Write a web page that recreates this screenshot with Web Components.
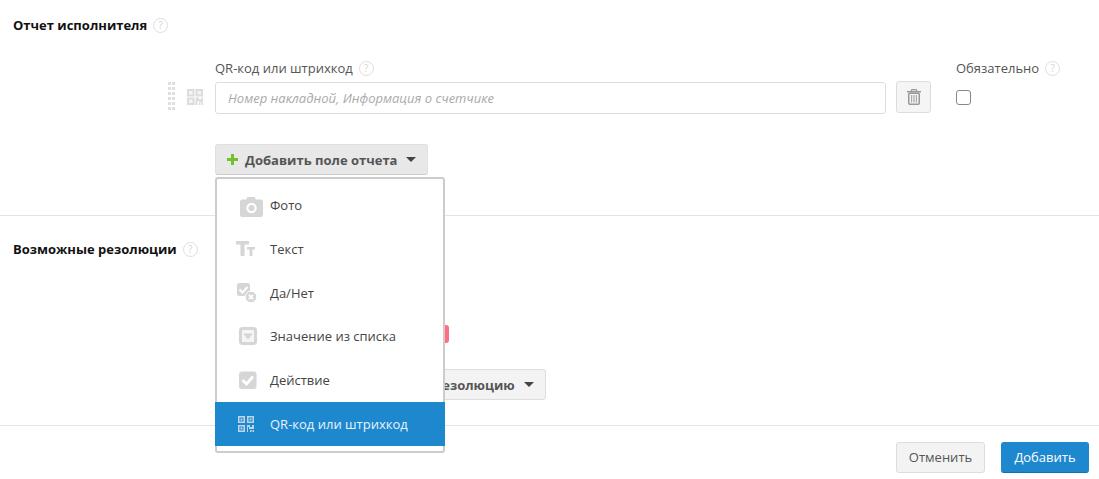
<!DOCTYPE html>
<html>
<head>
<meta charset="utf-8">
<title>Отчет исполнителя</title>
<style>
  html, body { margin: 0; background: #fff; }
  body { font: 13px/18px "Open Sans", "Liberation Sans", sans-serif; color: #333; }
</style>
</head>
<body>
<x-form>
  <x-section heading="Отчет исполнителя" size="216" top="16">
    <x-field-row label="QR-код или штрихкод" placeholder="Номер накладной, Информация о счетчике" required-label="Обязательно"></x-field-row>
    <x-dropdown>
      <x-button slot="trigger" active><x-plus slot="icon"></x-plus>Добавить поле отчета</x-button>
      <x-menu slot="menu">
        <x-menu-item icon="camera">Фото</x-menu-item>
        <x-menu-item icon="text">Текст</x-menu-item>
        <x-menu-item icon="yesno">Да/Нет</x-menu-item>
        <x-menu-item icon="list">Значение из списка</x-menu-item>
        <x-menu-item icon="check">Действие</x-menu-item>
        <x-menu-item icon="qr" selected>QR-код или штрихкод</x-menu-item>
      </x-menu>
    </x-dropdown>
  </x-section>
  <x-section heading="Возможные резолюции" size="210" top="24">
    <x-resolutions></x-resolutions>
  </x-section>
  <x-footer></x-footer>
</x-form>

<script>
const ICONS = {
  camera: `<path fill="#d6d6d6" d="M8 8.500a2 2 0 0 1 2-2h4l1.500-2.500h7L24 6.500h5a2 2 0 0 1 2 2V22a2 2 0 0 1-2 2H10a2 2 0 0 1-2-2z"/><circle cx="19.500" cy="15" r="5.200" fill="#fff"/><circle cx="19.500" cy="15" r="3" fill="#d6d6d6"/>`,
  text: `<path fill="#d6d6d6" d="M4 4h13v3.500h-4.500V19H8.500V7.500H4zM15 10h8v2.500h-2.500V19h-3v-6.500H15z"/>`,
  yesno: `<rect x="5" y="2" width="13" height="13" rx="2.500" fill="#d6d6d6"/><path fill="none" stroke="#fff" stroke-width="2" d="M7.500 8.500l3 3 5-5.500"/><circle cx="19" cy="16" r="5.800" fill="#d6d6d6" stroke="#fff" stroke-width="1"/><path stroke="#fff" stroke-width="1.800" d="M16.800 13.800l4.400 4.400M21.200 13.800l-4.400 4.400"/>`,
  list: `<rect x="8.500" y="4.500" width="15" height="15" rx="2" fill="#f6f6f6" stroke="#d6d6d6" stroke-width="3"/><path fill="#d6d6d6" d="M11 9.500h10l-5 6z"/>`,
  check: `<rect x="7" y="3.500" width="17.500" height="17.500" rx="3" fill="#d6d6d6"/><path fill="none" stroke="#fff" stroke-width="2.800" d="M10.500 12l4 4 6.500-7.500"/>`,
  qr: `<g fill="none" stroke="currentColor" stroke-width="1.500"><rect x="6.750" y="4.750" width="5.500" height="5.500"/><rect x="15.750" y="4.750" width="5.500" height="5.500"/><rect x="6.750" y="13.750" width="5.500" height="5.500"/></g><g fill="currentColor"><rect x="8.500" y="6.500" width="2" height="2"/><rect x="17.500" y="6.500" width="2" height="2"/><rect x="8.500" y="15.500" width="2" height="2"/><path d="M15 13h3v2h2v-2h2v4h-5v-2h-1v5h-1zM18 18h1.500v2H18zM20.500 18H22v2h-1.500z"/></g>`,
  qrFlat: `<g fill="#f4f4f4" stroke="#dcdcdc" stroke-width="2"><rect x="7" y="5" width="5.500" height="5.500"/><rect x="15.500" y="5" width="5.500" height="5.500"/><rect x="7" y="13.500" width="5.500" height="5.500"/></g><path fill="#dcdcdc" d="M14.500 12.500h3.500v2h2v-2h2v5h-4v-1.500h-1.500v4h-2zM18 18h1.500v2H18zM20.500 18H22v2h-1.500z"/>`
};

function define(name, css, html) {
  customElements.define(name, class extends HTMLElement {
    connectedCallback() {
      if (this.shadowRoot) return;
      const attrs = {};
      for (const a of this.attributes) attrs[a.name] = a.value;
      this.attachShadow({ mode: "open" }).innerHTML =
        `<style>${css}</style>` + (typeof html === "function" ? html(attrs) : html);
    }
  });
}

define("x-form", `:host{display:block;width:1099px;height:479px;overflow:hidden}`, `<slot></slot>`);

define("x-help", `
  :host{display:inline-flex;box-sizing:border-box;width:15px;height:15px;border:1px solid #dedede;border-radius:50%;
    align-items:center;justify-content:center;color:#d4d4d4;font:10px/13px "Open Sans",sans-serif}
`, `?`);

define("x-section", `
  :host{display:block;box-sizing:border-box;border-bottom:1px solid #e4e4e4;position:relative}
  h2{display:flex;align-items:center;gap:6px;margin:0;font:700 13px/18px "Open Sans",sans-serif;color:#111}
  header{padding:0 13px}
`, a => `<style>:host{height:${a.size}px}header{padding-top:${a.top}px}</style>
  <header><h2>${a.heading}<x-help></x-help></h2></header><slot></slot>`);

define("x-field-row", `
  :host{display:flex;padding:25px 0 0 168px}
  .handle{width:7px;height:28px;margin:23px 12px 0 0;
    background:repeating-linear-gradient(#e0e0e0 0 3px,transparent 3px 5px);
    -webkit-mask:repeating-linear-gradient(90deg,#000 0 3px,transparent 3px 4px)}
  .qr{width:28px;height:24px;margin:26px 0 0 -6px}
  .main{width:671px;margin-left:6px}
  label{display:flex;align-items:center;gap:6px;height:18px;margin-bottom:5px;color:#555}
  .input{box-sizing:border-box;height:32px;border:1px solid #ddd;border-radius:3px;padding:0 12px;
    font:italic 13px/30px "Open Sans",sans-serif;color:#aaa}
  .trash{box-sizing:border-box;width:35px;height:32px;margin:22px 0 0 10px;border:1px solid #ddd;border-radius:3px;background:#f5f5f5;
    display:flex;align-items:center;justify-content:center}
  .req{margin-left:25px}
  .box{box-sizing:border-box;width:15px;height:15px;border:1px solid #888;border-radius:3px;margin-top:13px;background:#fff}
`, a => `
  <div class="handle"></div>
  <svg class="qr" viewBox="0 0 28 24">${ICONS.qrFlat}</svg>
  <div class="main">
    <label>${a.label}<x-help></x-help></label>
    <div class="input">${a.placeholder}</div>
  </div>
  <div class="trash"><svg width="14" height="16" viewBox="0 0 14 16"><path fill="#999" d="M4.500 0h5l1 2H14v1.500H0V2h3.500zM5.300 1.200L5 2h4l-.3-.800z"/><rect x="1.750" y="4.250" width="10.500" height="11" rx="1" fill="none" stroke="#999" stroke-width="1.500"/><path fill="#aaa" d="M4 6h1.200v7.500H4zM6.400 6h1.200v7.500H6.400zM8.800 6H10v7.500H8.800z"/></svg></div>
  <div class="req">
    <label>${a["required-label"]}<x-help></x-help></label>
    <div class="box"></div>
  </div>`);

define("x-plus", `:host{display:block;width:11px;height:11px;background:
  linear-gradient(#72c02c,#72c02c) center/11px 3px no-repeat,
  linear-gradient(#72c02c,#72c02c) center/3px 11px no-repeat}`, ``);

define("x-button", `
  :host{display:inline-flex;box-sizing:border-box;height:31px;align-items:center;gap:7px;padding:0 11px;
    border:1px solid #ddd;border-radius:3px;background:#f3f3f3;font:700 13px/18px "Open Sans",sans-serif;color:#555;white-space:nowrap}
  :host([active]){background:#e8e8e8;border-color:#e0e0e0;border-bottom-color:#ccc}
  .caret{width:0;height:0;border:5px solid transparent;border-top-color:#444;border-bottom:0;margin-left:2px}
`, `<slot name="icon"></slot><slot></slot><span class="caret"></span>`);

define("x-dropdown", `
  :host{display:block;padding:30px 0 0 215px}
  .wrap{position:relative;display:inline-block;vertical-align:top}
  .pop{position:absolute;left:0;top:33px;z-index:5}
`, `<div class="wrap"><slot name="trigger"></slot><div class="pop"><slot name="menu"></slot></div></div>`);

define("x-menu", `
  :host{display:block;box-sizing:border-box;width:230px;height:276px;padding:4px 0 5px;background:#fff;
    border:2px solid #ccc;border-radius:3px}
`, `<slot></slot>`);

define("x-menu-item", `
  :host{display:flex;align-items:center;height:43.83px;margin:0 -2px;color:#444;font:13px/18px "Open Sans",sans-serif}
  :host([selected]){background:#1e88cf;color:#e8f3fb}
  svg{width:34px;height:24px;margin:0 4px 0 17px;flex:none}
  :host([selected]) svg{color:#bcd6ea}
`, a => `<svg viewBox="0 0 34 24">${ICONS[a.icon]}</svg><slot></slot>`);

define("x-resolutions", `
  :host{display:block}
  .chip{width:20px;height:18px;margin:67px 0 0 429px;background:#ff6f80;border-radius:3px}
  .add{margin:26px 0 0 334px}
`, `<div class="chip"></div><div class="add"><x-button><x-plus slot="icon"></x-plus>Добавить резолюцию</x-button></div>`);

define("x-footer", `
  :host{display:flex;justify-content:flex-end;gap:16px;padding:16px 10px 0 0}
  div{box-sizing:border-box;width:89px;height:31px;border:1px solid #ddd;border-radius:3px;background:#f3f3f3;color:#555;text-align:center;
    font:13px/29px "Open Sans",sans-serif}
  .primary{width:88px;background:#1e88cf;border-color:#1e88cf;border-bottom-color:#1670ad;color:#fff}
`, `<div>Отменить</div><div class="primary">Добавить</div>`);
</script>
</body>
</html>
